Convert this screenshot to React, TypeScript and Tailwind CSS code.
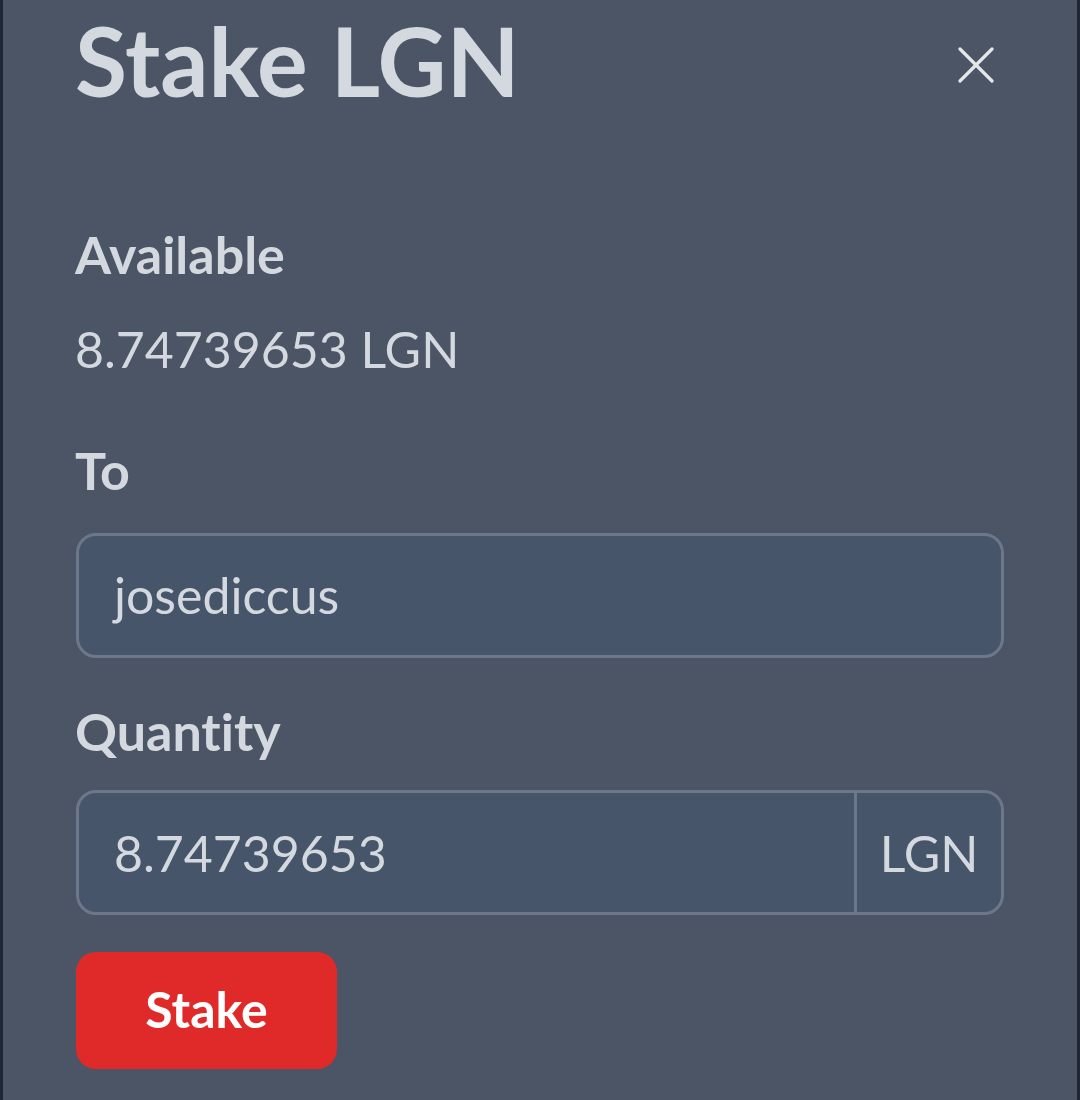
import React from "react"

const font = { fontFamily: "Lato, 'Noto Sans', sans-serif" }

function CloseIcon() {
  return (
    <svg width="36" height="36" viewBox="0 0 36 36" fill="none">
      <path d="M2 2 L34 34 M34 2 L2 34" stroke="#e5e7eb" strokeWidth="3.2" strokeLinecap="round" />
    </svg>
  )
}

export default function App() {
  return (
    <div
      style={font}
      className="min-h-[1100px] w-full border-x-[3px] border-[#1e2636] bg-[#4c5565] px-[73px] text-[#d4d8df] [font-variant-ligatures:none]"
    >
      <div className="flex items-start justify-between pt-[3px]">
        <h2 className="-ml-[1px] text-[95px] font-bold leading-[1.2]">Stake LGN</h2>
        <button className="mr-[10px] mt-[44px] flex items-center justify-center">
          <CloseIcon />
        </button>
      </div>

      <p className="-ml-[1px] mt-[106px] text-[52px] font-bold leading-[1.2]">Available</p>
      <p className="-ml-[1px] mt-[34px] text-[50px] leading-[1.2]">8.74739653 LGN</p>

      <p className="-ml-[1px] mt-[60px] text-[52px] font-bold leading-[1.2]">To</p>
      <div className="mt-[31px] flex h-[125px] items-center rounded-[20px] border-[3px] border-[#6c7789] bg-[#465569] px-[35px]">
        <span className="text-[50px] leading-none">josediccus</span>
      </div>

      <p className="-ml-[1px] mt-[42px] text-[52px] font-bold leading-[1.2]">Quantity</p>
      <div className="mt-[28px] flex h-[125px] overflow-hidden rounded-[20px] border-[3px] border-[#6c7789] bg-[#465569]">
        <div className="flex flex-1 items-center px-[35px]">
          <span className="text-[50px] leading-none">8.74739653</span>
        </div>
        <div className="flex w-[147px] items-center justify-center border-l-[3px] border-[#6c7789]">
          <span className="text-[50px] leading-none">LGN</span>
        </div>
      </div>

      <button className="mt-[37px] flex h-[117px] w-[261px] items-center justify-center rounded-[20px] bg-[#e02a2a] pb-[4px] text-[50px] font-bold leading-none text-white">
        Stake
      </button>
    </div>
  )
}
